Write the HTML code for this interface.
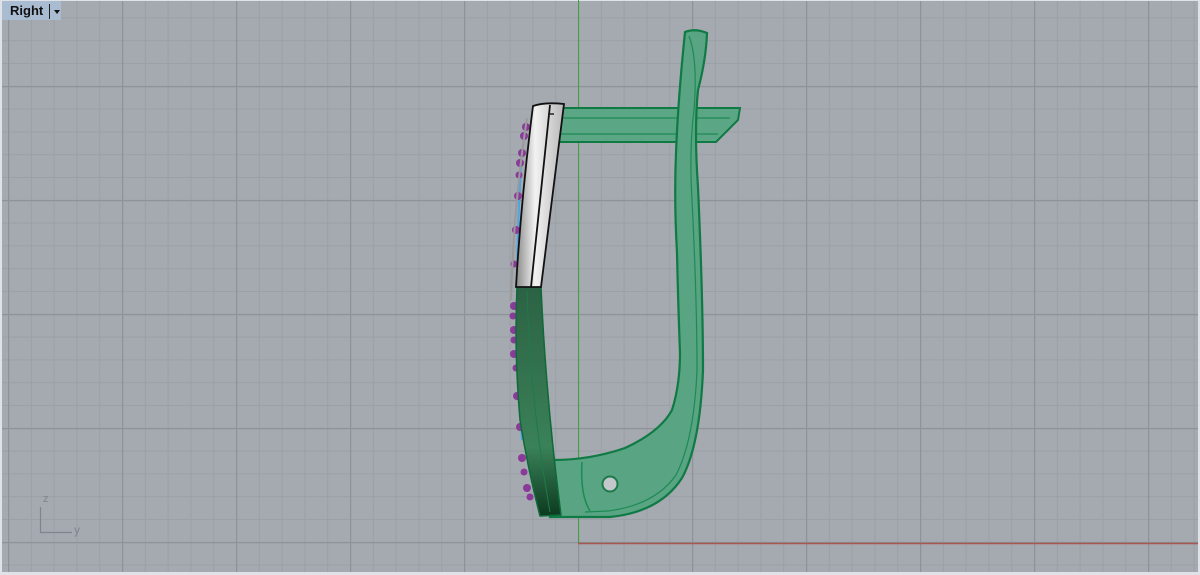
<!DOCTYPE html>
<html><head><meta charset="utf-8"><style>
html,body{margin:0;padding:0;width:1200px;height:575px;overflow:hidden;background:#dfe3e8}
svg{display:block}
.lbl{position:absolute;left:2px;top:1px;width:59px;height:19px;background:#a9bcd2}
.lbl span{position:absolute;left:8px;top:2px;font:bold 13px "Liberation Sans",sans-serif;color:#111}
.lbl i{position:absolute;left:47px;top:3px;width:1px;height:15px;background:#222}
.lbl b{position:absolute;left:52px;top:9px;width:0;height:0;border-left:3px solid transparent;border-right:3px solid transparent;border-top:4px solid #111}
</style></head><body>
<svg width="1200" height="575" viewBox="0 0 1200 575" xmlns="http://www.w3.org/2000/svg">
<defs>
<pattern id="mn" x="8" y="17.4" width="22.8" height="22.8" patternUnits="userSpaceOnUse">
<path d="M0.5 0V22.8M0 0.5H22.8" stroke="#9b9fa6" stroke-width="1" fill="none"/>
</pattern>
<pattern id="mj" x="8" y="86" width="114" height="114" patternUnits="userSpaceOnUse">
<path d="M0.5 0V114M0 0.5H114" stroke="#8e9299" stroke-width="1.5" fill="none"/>
</pattern>
<linearGradient id="sil" x1="0" x2="1" y1="0" y2="0">
<stop offset="0" stop-color="#8a8a8a"/><stop offset="0.4" stop-color="#f2f2f2"/><stop offset="1" stop-color="#b8b8b8"/>
</linearGradient>
<linearGradient id="dg" x1="0" x2="0" y1="0" y2="1">
<stop offset="0" stop-color="#2c6244"/><stop offset="0.7" stop-color="#3a8158"/><stop offset="1" stop-color="#0c3a20"/>
</linearGradient>
</defs>
<rect x="2" y="1" width="1196" height="571" fill="#a5a9b0"/>
<rect x="2" y="1" width="1196" height="571" fill="url(#mn)"/>
<rect x="2" y="1" width="1196" height="571" fill="url(#mj)"/>
<line x1="578.5" y1="0" x2="578.5" y2="543" stroke="#3fa23a" stroke-width="1"/>
<line x1="578" y1="543.5" x2="1198" y2="543.5" stroke="#a8574f" stroke-width="1.5"/>
<path d="M40.5 507V532.5H72" stroke="#80848b" stroke-width="1.2" fill="none"/>
<text x="43" y="502" font-family="Liberation Sans,sans-serif" font-size="11" fill="#80848b">z</text>
<text x="74" y="534" font-family="Liberation Sans,sans-serif" font-size="12" fill="#80848b">y</text>
<path d="M557 108H740L738 120L716 142H557Z" fill="#5aa685" stroke="#0f7a44" stroke-width="2"/>
<path d="M557 118H730M557 134H718" stroke="#1f8a54" stroke-width="1.2" fill="none"/>
<path d="M685 32Q695 28 707 33Q706 60 698 90Q694 130 698 187Q703 300 703 370Q700 445 682 478Q660 512 610 517L550 517L553 460Q590 460 625 448Q660 432 672 410Q680 385 680 353Q678 300 677 253Q674 200 676 153Q678 100 685 32Z" fill="#58a483" stroke="#0f7a44" stroke-width="2.2"/>
<path d="M689 36Q698 60 694 110Q689 150 692 200Q697 300 697 370Q694 440 676 475Q655 505 608 511L585 512" stroke="#1e8a53" stroke-width="1.2" fill="none"/>
<path d="M582 462Q580 495 590 511" stroke="#1e8a53" stroke-width="1.5" fill="none"/>
<circle cx="610" cy="484" r="7.5" fill="#c4c8cd" stroke="#1e7a48" stroke-width="2"/>
<path d="M522 150Q512 300 522 440" stroke="#4aa6e6" stroke-width="2" fill="none"/>
<g fill="#8a3a98">
<circle cx="526" cy="127" r="4"/><circle cx="524" cy="136" r="4"/><circle cx="522" cy="153" r="4"/><circle cx="520" cy="163" r="4"/><circle cx="519" cy="175" r="3.5"/><circle cx="518" cy="196" r="4"/><circle cx="516" cy="230" r="4"/><circle cx="514" cy="264" r="3.5"/><circle cx="514" cy="306" r="4"/><circle cx="513" cy="316" r="3.5"/><circle cx="514" cy="330" r="4"/><circle cx="514" cy="340" r="3.5"/><circle cx="514" cy="354" r="4"/><circle cx="516" cy="368" r="3.5"/><circle cx="517" cy="396" r="4"/><circle cx="520" cy="427" r="4"/><circle cx="522" cy="458" r="4"/><circle cx="524" cy="472" r="3.5"/><circle cx="527" cy="488" r="4"/><circle cx="530" cy="497" r="3.5"/>
</g>
<path d="M517 287H541Q546 400 561 515L540 516Q528 470 520 420Q514 350 517 287Z" fill="url(#dg)" stroke="#0e6a38" stroke-width="1.5"/>
<path d="M527 290Q530 400 550 512" stroke="#1e7a48" stroke-width="1" fill="none"/>
<path d="M533 106Q545 102 564 104L541 287H516Q521 200 533 106Z" fill="url(#sil)" stroke="#111" stroke-width="1.8"/>
<path d="M550 105Q540 200 531 287" stroke="#111" stroke-width="1.8" fill="none"/>
<path d="M527 118Q514 200 511 300" stroke="#9a9a9a" stroke-width="2" fill="none"/>
<path d="M548 114H554" stroke="#222" stroke-width="1.5"/>
</svg>
<div class="lbl"><span>Right</span><i></i><b></b></div>
</body></html>
